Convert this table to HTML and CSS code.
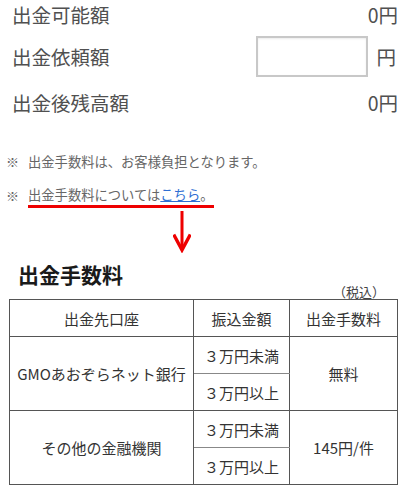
FILE: index.html
```html
<!DOCTYPE html>
<html lang="ja">
<head>
<meta charset="utf-8">
<link rel="stylesheet" href="styles.css">
</head>
<body>
<div class="summary">
  <div class="row row-first">
    <span class="label">出金可能額</span>
    <span class="value">0円</span>
  </div>
  <div class="row row-input">
    <span class="label">出金依頼額</span>
    <span class="value"><input class="amount" type="text"><span class="yen">円</span></span>
  </div>
  <div class="row row-last">
    <span class="label">出金後残高額</span>
    <span class="value">0円</span>
  </div>
</div>
<ul class="notes">
  <li class="note"><span class="mark">※</span><span>出金手数料は、お客様負担となります。</span></li>
  <li class="note note-link"><span class="mark">※</span><span class="annot">出金手数料については<a class="link" href="#">こちら</a>。</span></li>
</ul>
<div class="arrow-wrap">
  <svg class="arrow" width="18" height="42" viewBox="0 0 18 42">
    <rect x="7.5" y="0" width="3" height="37" fill="#ee0000"/>
    <path d="M1.5 25 L9 39 L16.5 25" fill="none" stroke="#ee0000" stroke-width="3.4" stroke-linecap="square"/>
  </svg>
</div>
<h2 class="title">出金手数料</h2>
<div class="tax">（税込）</div>
<table class="fees">
  <tr class="head">
    <th class="c1">出金先口座</th>
    <th class="c2">振込金額</th>
    <th class="c3">出金手数料</th>
  </tr>
  <tr>
    <td class="c1" rowspan="2">GMOあおぞらネット銀行</td>
    <td class="c2 sub-top">３万円未満</td>
    <td class="c3" rowspan="2">無料</td>
  </tr>
  <tr>
    <td class="c2">３万円以上</td>
  </tr>
  <tr>
    <td class="c1" rowspan="2">その他の金融機関</td>
    <td class="c2 sub-top">３万円未満</td>
    <td class="c3" rowspan="2">145円/件</td>
  </tr>
  <tr>
    <td class="c2">３万円以上</td>
  </tr>
</table>
</body>
</html>
```
FILE: styles.css
```css
html, body {
  margin: 0;
  padding: 0;
  background: #fff;
}
body {
  width: 400px;
  height: 488px;
  overflow: hidden;
  font-family: "Noto Sans CJK JP", "Noto Sans", sans-serif;
  color: #555;
}
.summary {
  padding: 0 2px 0 12px;
}
.row {
  display: flex;
  justify-content: space-between;
  align-items: center;
  font-size: 19.5px;
  color: #505050;
  line-height: 1;
}
.row-first {
  height: 30px;
}
.row-input {
  margin-top: 6px;
  height: 41px;
}
.row-last {
  margin-top: 11px;
  height: 30px;
}
.value {
  display: flex;
  align-items: center;
}
.amount {
  width: 112px;
  height: 41px;
  box-sizing: border-box;
  border: 2px solid #c8c8c8;
  box-shadow: inset 0 1px 2px rgba(0,0,0,0.08);
  margin: 0;
  padding: 0;
  background: #fff;
}
.yen {
  margin-left: 8px;
  margin-right: 2px;
}
.notes {
  list-style: none;
  margin: 34px 0 0 0;
  padding: 0 0 0 6px;
  font-size: 13.3px;
  color: #666;
}
.note {
  display: flex;
  align-items: center;
  height: 18px;
}
.note + .note {
  margin-top: 16px;
}
.mark {
  width: 22px;
  font-size: 13px;
}
.annot {
  border-bottom: 3px solid #ee0000;
  padding-bottom: 1px;
  margin-top: 2px;
}
.link {
  color: #2f6fd3;
  text-decoration: underline;
}
.arrow-wrap {
  margin-top: 7px;
  padding-left: 173px;
  height: 42px;
}
.arrow {
  display: block;
}
.title {
  margin: 9px 0 0 18px;
  font-size: 21px;
  font-weight: 700;
  color: #1a1a1a;
  line-height: 24px;
}
.tax {
  text-align: right;
  font-size: 13px;
  color: #444;
  padding-right: 15px;
  line-height: 14px;
  margin-top: -1px;
}
.fees {
  margin: 0 0 0 9px;
  width: 389px;
  border-collapse: collapse;
  font-size: 15px;
  color: #333;
}
.fees th, .fees td {
  border: 1px solid #555;
  text-align: center;
  font-weight: 400;
  padding: 0;
  height: 36px;
}
.fees .c1 { width: 183px; }
.fees .c2 { width: 95px; }
.fees .c3 { width: 107px; }
.fees td.sub-top {
  border-bottom: 1px solid #888;
}
```
